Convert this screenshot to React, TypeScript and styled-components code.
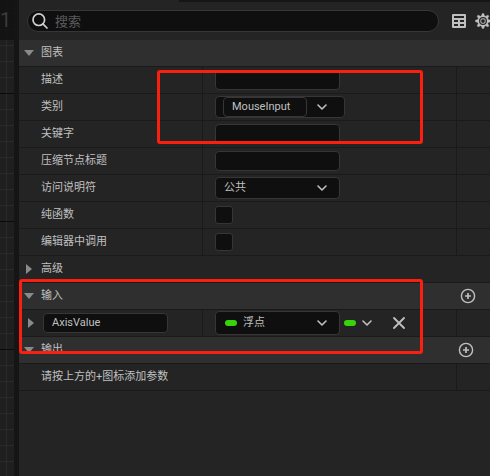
import React from "react";
import styled, { createGlobalStyle, css } from "styled-components";

const line = "#1a1a1a";
const text = "#c0c0c0";

const GlobalStyle = createGlobalStyle`
  * { box-sizing: border-box; }
  body {
    margin: 0;
    background: #242424;
    overflow: hidden;
    color: ${text};
    font-family: Roboto, "Noto Sans CJK SC", sans-serif;
    font-size: 11px;
    line-height: 16px;
  }
  button, input, select { font: inherit; color: inherit; margin: 0; }
`;

const Page = styled.div`
  display: grid;
  grid-template-columns: 14px 5px minmax(0, 1fr);
  min-height: 100vh;
`;

const GraphCanvas = styled.div`
  background:
    repeating-linear-gradient(to bottom, #0a0a0a 0 1px, transparent 1px 128px) 0 93px,
    repeating-linear-gradient(to bottom, #2a2a2a 0 1px, transparent 1px 16px) 0 13px,
    linear-gradient(to right, transparent 6px, #2a2a2a 6px 7px, transparent 7px),
    #1f1f1f;
  background-size: 100% 128px, 100% 16px, auto, auto;
`;

const CanvasBar = styled.div`
  height: 40px;
  background: rgba(16, 16, 16, 0.75);
  font-size: 20px;
  line-height: 40px;
  color: #3c3c3c;
`;

const Gutter = styled.div`
  background: #151515;
`;

const Panel = styled.main`
  position: relative;
  min-width: 0;
  background: #242424;
`;

const TabStrip = styled.div`
  height: 2px;
  margin-left: 160px;
  background: #161616;
`;

const Toolbar = styled.div`
  display: flex;
  align-items: center;
  height: 38px;
  padding-left: 8px;
`;

const SearchBox = styled.label`
  display: flex;
  flex: 1;
  align-items: center;
  gap: 7px;
  min-width: 0;
  height: 22px;
  padding: 0 4px;
  border: 1px solid #363636;
  border-radius: 11px;
  background: #0f0f0f;
`;

const SearchInput = styled.input`
  flex: 1;
  min-width: 0;
  height: 18px;
  padding: 0;
  border: 0;
  outline: 0;
  background: transparent;
  font-size: 13px;
  &::placeholder { color: #5c5c5c; opacity: 1; }
`;

const IconButton = styled.button`
  display: flex;
  flex: none;
  align-items: center;
  justify-content: center;
  padding: 0;
  border: 0;
  background: transparent;
  color: #c0c0c0;
`;

const ToolbarActions = styled.div`
  display: flex;
  flex: none;
  align-items: center;
  gap: 9px;
  width: 51px;
  padding-left: 13px;
  overflow: hidden;
`;

const Section = styled.header<{ $plain?: boolean; $first?: boolean }>`
  display: flex;
  align-items: center;
  height: ${(p) => (p.$first ? 26 : 27)}px;
  padding-left: 5px;
  border-top: ${(p) => (p.$first ? 0 : 1)}px solid ${line};
  background: ${(p) => (p.$plain ? "#242424" : "#2f2f2f")};
`;

const Toggle = styled.button`
  display: flex;
  align-items: center;
  gap: 7px;
  padding: 0;
  border: 0;
  background: transparent;
`;

const AddButton = styled(IconButton)<{ $inset: number }>`
  margin-left: auto;
  margin-right: ${(p) => p.$inset}px;
`;

const Row = styled.div<{ $wide?: boolean }>`
  display: grid;
  grid-template-columns: ${(p) => (p.$wide ? "minmax(0, 1fr) 34px" : "183px minmax(0, 1fr) 34px")};
  height: 27px;
  border-top: 1px solid ${line};
`;

const Cell = styled.div<{ $name?: boolean }>`
  display: flex;
  align-items: center;
  min-width: 0;
  padding-left: ${(p) => (p.$name ? 22 : 12)}px;
  & + & { border-left: 1px solid ${line}; }
`;

const NameCell = styled(Cell)`
  gap: 7px;
  padding-left: 7px;
`;

const field = css`
  border: 1px solid #363636;
  border-radius: 4px;
  background: #0f0f0f;
  outline: 0;
`;

const TextField = styled.input`
  ${field}
  width: 125px;
  height: 20px;
  padding: 0 8px 2px;
`;

const Combo = styled.div<{ $category?: boolean; $tall?: boolean }>`
  ${field}
  display: flex;
  flex: none;
  align-items: center;
  width: ${(p) => (p.$category ? 130 : 125)}px;
  height: ${(p) => (p.$tall ? 24 : 22)}px;
  padding: ${(p) => (p.$category ? "0 17px 0 7px" : p.$tall ? "0 12px 0 9px" : "0 12px 0 8px")};
`;

const CategoryInput = styled.input`
  ${field}
  width: 84px;
  height: 20px;
  margin-right: auto;
  padding: 0 8px 2px;
`;

const Choice = styled.select`
  flex: 1;
  min-width: 0;
  height: 20px;
  padding: 0;
  appearance: none;
  border: 0;
  outline: 0;
  background: transparent;
`;

const CheckBox = styled.input.attrs({ type: "checkbox" })`
  ${field}
  width: 18px;
  height: 18px;
  appearance: none;
  border-radius: 3px;
`;

const Pin = styled.span`
  flex: none;
  width: 12px;
  height: 6px;
  margin-right: 6px;
  border-radius: 3px;
  background: #37d40b;
`;

const PinButton = styled(IconButton)`
  margin-left: 4px;
`;

const RemoveButton = styled(IconButton)`
  margin-left: 21px;
`;

const Highlight = styled.div<{ $top: number; $left: number; $width: number; $height: number }>`
  position: absolute;
  top: ${(p) => p.$top}px;
  left: ${(p) => p.$left}px;
  width: ${(p) => p.$width}px;
  height: ${(p) => p.$height}px;
  border: 3px solid #fb1f10;
  border-radius: 3px;
  pointer-events: none;
`;

const SearchIcon = () => (
  <svg width="16" height="16" viewBox="0 0 16 16" fill="none" stroke="#d0d0d0" strokeWidth="1.7">
    <circle cx="6.8" cy="6.7" r="5.8" />
    <path d="M10.9 10.9 15 15" strokeLinecap="round" />
  </svg>
);

const TableIcon = () => (
  <svg width="14" height="14" viewBox="0 0 14 14">
    <path
      fill="currentColor"
      fillRule="evenodd"
      d="M1 0H13Q14 0 14 1V13Q14 14 13 14H1Q0 14 0 13V1Q0 0 1 0ZM2 2V4H12V2ZM2 6V8H6V6ZM8 6V8H12V6ZM2 10V12H6V10ZM8 10V12H12V10Z"
    />
  </svg>
);

const GearIcon = () => (
  <svg width="16" height="16" viewBox="-8 -8 16 16" fill="none" stroke="currentColor">
    <circle r="4.7" strokeWidth="1.5" />
    <circle r="2.3" strokeWidth="1.2" opacity="0.75" />
    {[0, 45, 90, 135, 180, 225, 270, 315].map((angle) => (
      <path key={angle} d="M-1.6-5-0.7-7.6H0.7L1.6-5Z" fill="currentColor" strokeWidth="0.4" transform={`rotate(${angle})`} />
    ))}
  </svg>
);

const Arrow = ({ open = false }: { open?: boolean }) => (
  <svg width="10" height="10" viewBox="0 0 10 10" fill="#8a8a8a">
    <path d={open ? "M0 2H10L5 8Z" : "M2 0V10L8 5Z"} />
  </svg>
);

const Chevron = () => (
  <svg width="10" height="6" viewBox="0 0 10 6" fill="none" stroke="#c0c0c0" strokeWidth="1.6" strokeLinecap="round" strokeLinejoin="round">
    <path d="M1 1 5 5 9 1" />
  </svg>
);

const PlusIcon = () => (
  <svg width="16" height="16" viewBox="0 0 16 16" fill="none" stroke="currentColor" strokeWidth="1.4">
    <circle cx="8" cy="8" r="6.6" />
    <path d="M8 5V11M5 8H11" strokeWidth="1.7" />
  </svg>
);

const CloseIcon = () => (
  <svg width="12" height="12" viewBox="0 0 12 12" fill="none" stroke="currentColor" strokeWidth="1.8" strokeLinecap="round">
    <path d="M1 1 11 11M11 1 1 11" />
  </svg>
);

type PropertyProps = { label: string; id: string; children: React.ReactNode };

const Property = ({ label, id, children }: PropertyProps) => (
  <Row>
    <Cell $name>
      <label htmlFor={id}>{label}</label>
    </Cell>
    <Cell>{children}</Cell>
    <Cell />
  </Row>
);

export default function App() {
  return (
    <Page>
      <GlobalStyle />
      <GraphCanvas>
        <CanvasBar>1</CanvasBar>
      </GraphCanvas>
      <Gutter />
      <Panel>
        <TabStrip />
        <Toolbar>
          <SearchBox>
            <SearchIcon />
            <SearchInput type="search" placeholder="搜索" aria-label="搜索" />
          </SearchBox>
          <ToolbarActions>
            <IconButton aria-label="表格"><TableIcon /></IconButton>
            <IconButton aria-label="设置"><GearIcon /></IconButton>
          </ToolbarActions>
        </Toolbar>

        <Section $first>
          <Toggle aria-expanded="true"><Arrow open />图表</Toggle>
        </Section>
        <Property label="描述" id="description"><TextField id="description" /></Property>
        <Property label="类别" id="category">
          <Combo $category>
            <CategoryInput id="category" defaultValue="MouseInput" />
            <IconButton aria-label="类别"><Chevron /></IconButton>
          </Combo>
        </Property>
        <Property label="关键字" id="keywords"><TextField id="keywords" /></Property>
        <Property label="压缩节点标题" id="compact"><TextField id="compact" /></Property>
        <Property label="访问说明符" id="access">
          <Combo>
            <Choice id="access"><option>公共</option></Choice>
            <Chevron />
          </Combo>
        </Property>
        <Property label="纯函数" id="pure"><CheckBox id="pure" /></Property>
        <Property label="编辑器中调用" id="editor"><CheckBox id="editor" /></Property>
        <Section $plain>
          <Toggle aria-expanded="false"><Arrow />高级</Toggle>
        </Section>

        <Section>
          <Toggle aria-expanded="true"><Arrow open />输入</Toggle>
          <AddButton $inset={14} aria-label="添加输入"><PlusIcon /></AddButton>
        </Section>
        <Row>
          <NameCell>
            <IconButton aria-label="展开"><Arrow /></IconButton>
            <TextField aria-label="输入" defaultValue="AxisValue" />
          </NameCell>
          <Cell>
            <Combo $tall>
              <Pin />
              <Choice aria-label="类型"><option>浮点</option></Choice>
              <Chevron />
            </Combo>
            <PinButton aria-label="容器"><Pin /><Chevron /></PinButton>
            <RemoveButton aria-label="移除"><CloseIcon /></RemoveButton>
          </Cell>
          <Cell />
        </Row>

        <Section>
          <Toggle aria-expanded="true"><Arrow open />输出</Toggle>
          <AddButton $inset={16} aria-label="添加输出"><PlusIcon /></AddButton>
        </Section>
        <Row $wide>
          <Cell $name>请按上方的+图标添加参数</Cell>
          <Cell />
        </Row>
        <Section $plain />

        <Highlight $top={70} $left={138} $width={266} $height={74} />
        <Highlight $top={279} $left={0} $width={404} $height={75} />
      </Panel>
    </Page>
  );
}
